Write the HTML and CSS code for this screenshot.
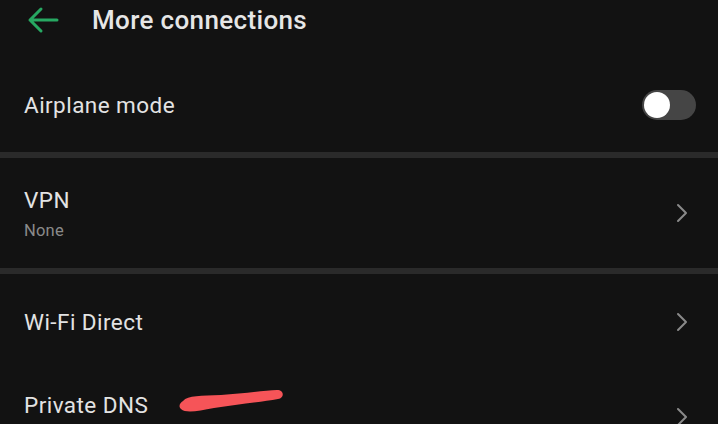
FILE: index.html
```html
<!DOCTYPE html>
<html>
<head>
<meta charset="utf-8">
<link rel="stylesheet" href="styles.css">
</head>
<body>
<div class="screen">
  <header class="header">
    <svg class="back" width="32" height="28" viewBox="0 0 32 28">
      <path d="M30 14H3M14 3L3 14l11 11" fill="none" stroke="#27a862" stroke-width="3" stroke-linecap="round" stroke-linejoin="round"/>
    </svg>
    <h1 class="title">More connections</h1>
  </header>

  <section class="group group-first">
    <div class="row">
      <div class="label">Airplane mode</div>
      <div class="toggle"><span class="knob"></span></div>
    </div>
  </section>

  <div class="divider"></div>

  <section class="group group-vpn">
    <div class="row row-tall">
      <div class="texts">
        <div class="label">VPN</div>
        <div class="sub">None</div>
      </div>
      <svg class="chev" width="12" height="20" viewBox="0 0 12 20"><path d="M2 2l8 8-8 8" fill="none" stroke="#8a8a8a" stroke-width="2" stroke-linecap="round" stroke-linejoin="round"/></svg>
    </div>
  </section>

  <div class="divider"></div>

  <section class="group group-last">
    <div class="row row-wifi">
      <div class="label">Wi-Fi Direct</div>
      <svg class="chev" width="12" height="20" viewBox="0 0 12 20"><path d="M2 2l8 8-8 8" fill="none" stroke="#8a8a8a" stroke-width="2" stroke-linecap="round" stroke-linejoin="round"/></svg>
    </div>
    <div class="row row-tall">
      <div class="texts texts-dns">
        <div class="label">Private DNS
          <svg class="scribble" width="110" height="26" viewBox="0 0 110 26">
            <path d="M7 12 C 12 6, 25 7, 45 6 C 65 5, 88 1.5, 101 1 C 108 1, 109 8.5, 102 10 C 85 13, 60 15.5, 38 19 C 22 22, 10 24.5, 5 20 C 2 17, 4 14, 7 12 Z" fill="#f65458"/>
          </svg>
        </div>
      </div>
      <svg class="chev" width="12" height="20" viewBox="0 0 12 20"><path d="M2 2l8 8-8 8" fill="none" stroke="#8a8a8a" stroke-width="2" stroke-linecap="round" stroke-linejoin="round"/></svg>
    </div>
  </section>
</div>
</body>
</html>
```

FILE: styles.css
```css
* { box-sizing: border-box; margin: 0; padding: 0; }
html, body { background: #121212; }
body { width: 718px; height: 424px; overflow: hidden; font-family: Roboto, "Noto Sans", Arial, sans-serif; }
.screen { width: 718px; }
.header { height: 40px; display: flex; align-items: center; }
.back { margin-left: 27px; }
.title { margin-left: 33px; font-size: 26px; font-weight: 500; color: #e6e6e6; letter-spacing: 0.35px; }
.group-first { padding: 23px 0 6px; }
.group-vpn { height: 110px; display: flex; align-items: center; }
.group-vpn .row { width: 100%; }
.group-last { padding-top: 8px; }
.row { height: 83px; display: flex; align-items: center; justify-content: space-between; padding: 0 30px 0 24px; }
.row-wifi { height: 80px; }
.group-last .row-tall { height: 110px; }
.group-first .row { padding-right: 22px; }
.label { font-size: 22.5px; color: #e3e3e3; position: relative; letter-spacing: 0.45px; }
.sub { font-size: 16.5px; color: #8a8a8a; margin-top: 8px; letter-spacing: 0.2px; }
.texts-dns { padding-bottom: 24px; }
.divider { height: 6px; background: #2a2a2a; }
.toggle { width: 54px; height: 30px; border-radius: 15px; background: #454545; display: flex; align-items: center; padding-left: 2px; }
.knob { width: 26px; height: 26px; border-radius: 50%; background: #fff; }
.chev { display: block; }
.scribble { position: absolute; left: 152px; top: -3px; }
```
